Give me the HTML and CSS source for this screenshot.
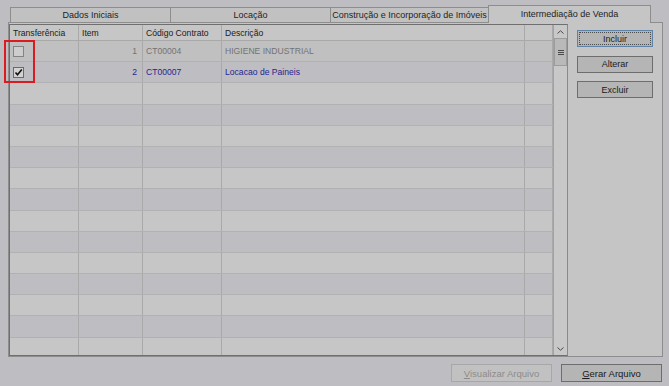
FILE: index.html
```html
<!DOCTYPE html>
<html lang="pt-BR">
<head>
    <meta charset="UTF-8">
    <title>Intermediação de Venda</title>
    <link rel="stylesheet" href="styles.css">
</head>
<body>
<div class="window">
    <div class="tabs">
        <div class="tab first">Dados Iniciais</div>
        <div class="tab second">Locação</div>
        <div class="tab third">Construção e Incorporação de Imóveis</div>
        <div class="tab active">Intermediação de Venda</div>
    </div>

    <div class="panel">
        <div class="grid-box">
            <div class="grid">
                <div class="grid-head">
                    <div class="cell">Transferência</div>
                    <div class="cell">Item</div>
                    <div class="cell">Código Contrato</div>
                    <div class="cell">Descrição</div>
                    <div class="cell"></div>
                </div>
                <div class="grid-body">
                    <div class="row sel grey">
                        <div class="cell"><span class="check"></span></div>
                        <div class="cell num">1</div>
                        <div class="cell">CT00004</div>
                        <div class="cell">HIGIENE INDUSTRIAL</div>
                        <div class="cell"></div>
                    </div>
                    <div class="row alt blue">
                        <div class="cell">
                            <span class="check on">
                                <svg width="9" height="9" viewBox="0 0 9 9"><path d="M1.5 4.5 L3.5 6.8 L7.8 1.6" fill="none" stroke="#111" stroke-width="1.6"/></svg>
                            </span>
                        </div>
                        <div class="cell num">2</div>
                        <div class="cell">CT00007</div>
                        <div class="cell">Locacao de Paineis</div>
                        <div class="cell"></div>
                    </div>
                    <div class="row"><div class="cell"></div><div class="cell"></div><div class="cell"></div><div class="cell"></div><div class="cell"></div></div>
                    <div class="row alt"><div class="cell"></div><div class="cell"></div><div class="cell"></div><div class="cell"></div><div class="cell"></div></div>
                    <div class="row"><div class="cell"></div><div class="cell"></div><div class="cell"></div><div class="cell"></div><div class="cell"></div></div>
                    <div class="row alt"><div class="cell"></div><div class="cell"></div><div class="cell"></div><div class="cell"></div><div class="cell"></div></div>
                    <div class="row"><div class="cell"></div><div class="cell"></div><div class="cell"></div><div class="cell"></div><div class="cell"></div></div>
                    <div class="row alt"><div class="cell"></div><div class="cell"></div><div class="cell"></div><div class="cell"></div><div class="cell"></div></div>
                    <div class="row"><div class="cell"></div><div class="cell"></div><div class="cell"></div><div class="cell"></div><div class="cell"></div></div>
                    <div class="row alt"><div class="cell"></div><div class="cell"></div><div class="cell"></div><div class="cell"></div><div class="cell"></div></div>
                    <div class="row"><div class="cell"></div><div class="cell"></div><div class="cell"></div><div class="cell"></div><div class="cell"></div></div>
                    <div class="row alt"><div class="cell"></div><div class="cell"></div><div class="cell"></div><div class="cell"></div><div class="cell"></div></div>
                    <div class="row"><div class="cell"></div><div class="cell"></div><div class="cell"></div><div class="cell"></div><div class="cell"></div></div>
                    <div class="row alt"><div class="cell"></div><div class="cell"></div><div class="cell"></div><div class="cell"></div><div class="cell"></div></div>
                    <div class="row"><div class="cell"></div><div class="cell"></div><div class="cell"></div><div class="cell"></div><div class="cell"></div></div>
                </div>
            </div>
            <div class="scrollbar">
                <div class="sb-btn">
                    <svg width="7" height="4" viewBox="0 0 7 4"><path d="M0.5 3.5 L3.5 0.8 L6.5 3.5" fill="none" stroke="#4a4a4a" stroke-width="1"/></svg>
                </div>
                <div class="sb-thumb">
                    <svg width="6" height="6" viewBox="0 0 6 6"><path d="M0 1.5 H6 M0 3.5 H6 M0 5.5 H6" stroke="#4a4a4a" stroke-width="1"/></svg>
                </div>
                <div class="sb-track"></div>
                <div class="sb-btn">
                    <svg width="7" height="4" viewBox="0 0 7 4"><path d="M0.5 0.5 L3.5 3.2 L6.5 0.5" fill="none" stroke="#4a4a4a" stroke-width="1"/></svg>
                </div>
            </div>
        </div>

        <div class="side-buttons">
            <button class="btn focus">Incluir</button>
            <button class="btn">Alterar</button>
            <button class="btn">Excluir</button>
        </div>
    </div>

    <div class="footer">
        <button class="btn wide" disabled><u>V</u>isualizar Arquivo</button>
        <button class="btn wide"><u>G</u>erar Arquivo</button>
    </div>
</div>

<!-- annotation drawn over the screenshot -->
<div class="highlight"></div>
</body>
</html>
```

FILE: styles.css
```css
body {
    margin: 0;
    width: 669px;
    height: 386px;
    overflow: hidden;
    position: relative;
    background-color: #bebdc2;
    font-family: "Liberation Sans", Arial, sans-serif;
    font-size: 9px;
    color: #1e1e1e;
}
.window {
    padding: 5px 0 0 8px;
}

/* tab strip */
.tabs {
    display: flex;
    align-items: flex-end;
    height: 17px;
    padding-left: 2px;
}
.tab {
    height: 15px;
    box-sizing: border-box;
    border-top: 1px solid #8d8d8d;
    border-right: 1px solid #8d8d8d;
    background-color: #c1c1c1;
    display: flex;
    align-items: center;
    justify-content: center;
    white-space: nowrap;
}
.tab.first {
    width: 161px;
    border-left: 1px solid #8d8d8d;
}
.tab.second {
    width: 160px;
}
.tab.third {
    width: 157px;
    border-right: none;
}
.tab.active {
    width: 163px;
    height: 18px;
    margin-bottom: -1px;
    padding-bottom: 1px;
    border-left: 1px solid #8d8d8d;
    background-color: #c5c5c5;
    position: relative;
    z-index: 1;
}

/* tab page */
.panel {
    width: 655px;
    height: 335px;
    box-sizing: border-box;
    border: 1px solid #8d8d8d;
    background-color: #c5c5c5;
    display: flex;
    align-items: flex-start;
}
.grid-box {
    margin-top: 1px;
    height: 332px;
    box-sizing: border-box;
    border: 1px solid #6f6f6f;
    border-right-color: #8a8a8a;
    display: flex;
}
.grid {
    width: 543px;
    display: flex;
    flex-direction: column;
}
.grid-head,
.row {
    display: grid;
    grid-template-columns: 69px 64px 79px 303px 28px;
}
.grid-head {
    height: 16px;
    box-sizing: border-box;
    border-bottom: 1px solid #a9a9a9;
    background-color: #c6c6c6;
}
.cell {
    box-sizing: border-box;
    border-right: 1px solid #a9a9a9;
    padding: 0 3px;
    display: flex;
    align-items: center;
    white-space: nowrap;
    overflow: hidden;
    font-size: 8.6px;
}
.grid-head .cell {
    color: #202020;
}
.grid-body {
    height: 314px;
    overflow: hidden;
}
.row {
    height: 21.2px;
    box-sizing: border-box;
    border-bottom: 1px solid #b1b1b3;
    background-color: #c6c6c6;
}
.row.alt {
    background-color: #bebdc2;
}
.row.sel {
    background-color: #c0c0c0;
}
.row .cell.num {
    justify-content: flex-end;
    padding-right: 5px;
}
.row.grey .cell {
    color: #737373;
}
.row.blue .cell {
    color: #25258e;
}
.check {
    width: 11px;
    height: 11px;
    box-sizing: border-box;
    border: 1px solid #848484;
    background-color: #cdcdcd;
    display: flex;
    align-items: center;
    justify-content: center;
}
.check.on {
    border-color: #6a6a6a;
    background-color: #d2d2d2;
}

/* vertical scrollbar */
.scrollbar {
    width: 14px;
    box-sizing: border-box;
    border-left: 1px solid #a2a2a2;
    background-color: #c8c8c8;
    display: flex;
    flex-direction: column;
}
.sb-btn {
    height: 13px;
    display: flex;
    align-items: center;
    justify-content: center;
}
.sb-thumb {
    height: 28px;
    box-sizing: border-box;
    border: 1px solid #9c9c9c;
    background-color: #b9b9b9;
    display: flex;
    align-items: center;
    justify-content: center;
}
.sb-track {
    flex: 1;
}

/* buttons */
.side-buttons {
    margin: 7px 0 0 9px;
    display: flex;
    flex-direction: column;
    gap: 8.5px;
}
.btn {
    width: 76px;
    height: 17px;
    padding: 0;
    border: 1px solid #6d6d6d;
    background-color: #b5b5b5;
    color: #1a1a1a;
    font-family: "Liberation Sans", Arial, sans-serif;
    font-size: 9px;
}
.btn.focus {
    border-color: #5d83a8;
    outline: 1px dotted #4a4a4a;
    outline-offset: -3px;
}
.footer {
    width: 655px;
    box-sizing: border-box;
    padding-right: 1px;
    margin-top: 7px;
    display: flex;
    justify-content: flex-end;
    gap: 9px;
}
.btn.wide {
    width: 101px;
    height: 18px;
    font-size: 9.5px;
}
.btn:disabled {
    border-color: #a7a7a7;
    background-color: #c1c1c1;
    color: #8c8c8c;
}

/* red annotation box */
.highlight {
    position: absolute;
    left: 4px;
    top: 40px;
    width: 31px;
    height: 43px;
    box-sizing: border-box;
    border: 2px solid #dc1a1f;
}
```
